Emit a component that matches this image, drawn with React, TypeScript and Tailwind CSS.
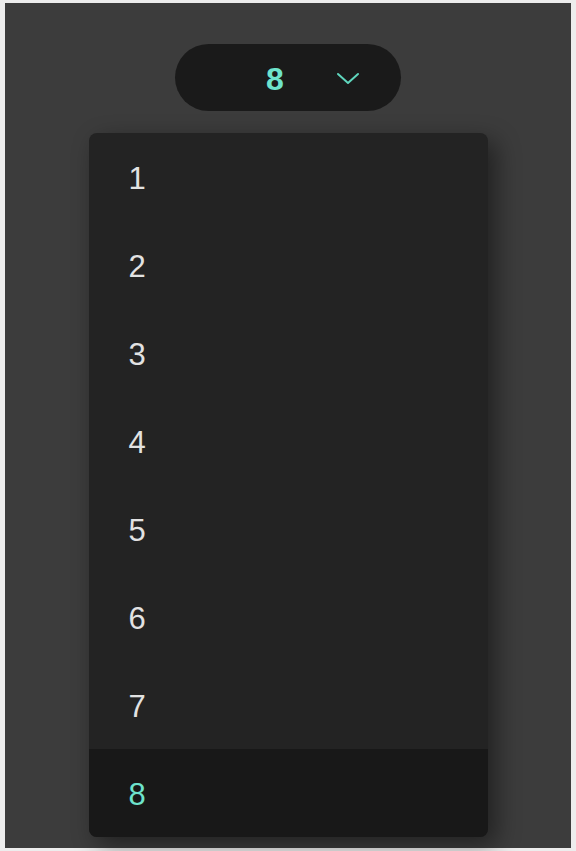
import React from "react";

export default function App() {
  const items = [1, 2, 3, 4, 5, 6, 7, 8];
  const selected = 8;
  return (
    <div
      className="w-full h-[851px] bg-[#ededed] pt-[3px] pb-[3px] pl-[5px] pr-[5px]"
      style={{ fontFamily: '"Liberation Sans", Arial, sans-serif' }}
    >
      <div className="h-full bg-[#3c3c3c] flex flex-col items-center">
        <div className="mt-[41px] w-[226px] h-[67px] rounded-full bg-[#1a1a1a] flex items-center pl-[91px] pt-[2px]">
          <span className="text-[32px] leading-none font-semibold text-[#6ee3cc]">8</span>
          <svg className="ml-[52px] mb-[2px]" width="24" height="14" viewBox="0 0 24 14" fill="none">
            <polyline points="2,3 12,12 22,3" stroke="#5fd6bd" strokeWidth="2" strokeLinecap="round" strokeLinejoin="round" />
          </svg>
        </div>
        <div className="mt-[22px] w-[399px] rounded-lg bg-[#232323] overflow-hidden shadow-[8px_8px_24px_rgba(0,0,0,0.45)] flex flex-col">
          {items.map((n) => (
            <div
              key={n}
              className={
                n === selected
                  ? "h-[88px] flex items-center pl-[40px] pt-[4px] bg-[#181818] text-[#6ee3cc] text-[31px]"
                  : "h-[88px] flex items-center pl-[40px] pt-[4px] text-[#e2e2e2] text-[31px]"
              }
            >
              {n}
            </div>
          ))}
        </div>
      </div>
    </div>
  );
}
